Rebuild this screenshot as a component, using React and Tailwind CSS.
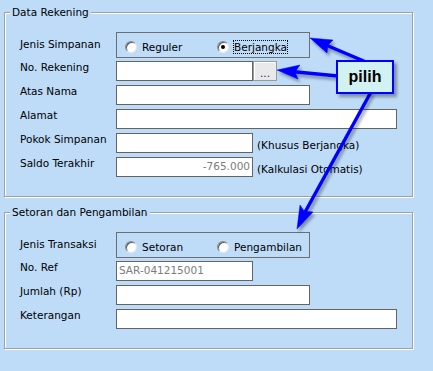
import React from 'react';

const Radio = ({ checked }) => (
  <span className="mt-[1px] w-[12px] h-[12px] shrink-0 rounded-full border border-[#8a8a8a] border-b-[#e8e8e8] border-r-[#e8e8e8] bg-white shadow-[inset_1px_1px_0_#5a5a5a] flex items-center justify-center">
    {checked && <span className="w-[4px] h-[4px] rounded-full bg-black" />}
  </span>
);

const Option = ({ label, checked, focused, className = '' }) => (
  <div className={`flex items-start ${className}`}>
    <Radio checked={checked} />
    <span className={`ml-[4px] leading-[12px] border ${focused ? 'border-dotted border-black' : 'border-transparent'}`}>
      {label}
    </span>
  </div>
);

const RadioRow = ({ label, left, right, rightChecked, rightFocused }) => (
  <div className="flex h-[26px]">
    <span className="w-[96px] pt-[6px] leading-[13px]">{label}</span>
    <div className="w-[194px] h-[26px] border border-[#6e6e6e] flex items-start pt-[7px] pl-[8px]">
      <Option label={left} className="w-[92px]" />
      <Option label={right} checked={rightChecked} focused={rightFocused} />
    </div>
  </div>
);

const Field = ({ label, width, value, right, muted, first, children }) => (
  <div className={`flex h-[20px] ${first ? 'mt-[3px]' : 'mt-[4px]'}`}>
    <span className="w-[96px] leading-[13px]">{label}</span>
    <div
      className={`h-[20px] border border-[#646464] bg-white pt-[2px] px-[2px] leading-[12px] whitespace-nowrap overflow-hidden ${right ? 'text-right' : ''} ${muted ? 'text-[#7c7c7c]' : ''}`}
      style={{ width }}
    >
      {value}
    </div>
    {children}
  </div>
);

const GroupBox = ({ title, className = '', children }) => (
  <fieldset className={`w-[409px] border border-[#a0a0a0] shadow-[1px_1px_0_#fff,inset_1px_1px_0_#fff] pl-[5px] pt-[12px] pb-[19px] ${className}`}>
    <legend className="px-[2px] leading-[15px] bg-[#bedcf8]">{title}</legend>
    <div className="pl-[10px] flex flex-col">{children}</div>
  </fieldset>
);

const Note = ({ children }) => (
  <span className="ml-[4px] pt-[6px] leading-[13px] whitespace-nowrap">{children}</span>
);

const Callout = () => (
  <>
    <svg className="absolute left-0 top-0 pointer-events-none" width="433" height="371" viewBox="0 0 433 371">
      <defs>
        <filter id="sh" x="-20%" y="-20%" width="140%" height="140%">
          <feDropShadow dx="2" dy="3" stdDeviation="1.5" floodColor="#000" floodOpacity="0.35" />
        </filter>
      </defs>
      <g fill="#0000ff" stroke="#0000ff" filter="url(#sh)">
        <line x1="366" y1="62" x2="326" y2="45" strokeWidth="3.5" />
        <polygon points="310,38 333,40 328,45 327,53" strokeWidth="0.5" />
        <line x1="338" y1="76" x2="294" y2="71.8" strokeWidth="3.5" />
        <polygon points="277,70 300,65 295,72 298,79" strokeWidth="0.5" />
        <line x1="371" y1="92" x2="304" y2="214" strokeWidth="3.5" />
        <polygon points="297,229 300,205 304,211 313,212" strokeWidth="0.5" />
      </g>
    </svg>
    <div className="absolute left-[336px] top-[60px] w-[58px] h-[34px] border-2 border-[#0000ff] bg-[#d2f1f3] shadow-[3px_3px_3px_rgba(0,0,0,0.35)] flex items-center justify-center font-['Liberation_Sans',sans-serif] font-bold text-[16px] leading-none text-black">
      pilih
    </div>
  </>
);

export default function App() {
  return (
    <div className="relative w-[433px] h-[371px] overflow-hidden bg-[#bedcf8] pl-[4px] pt-[5px] font-['DejaVu_Sans',sans-serif] text-[10.5px] text-black">
      <GroupBox title="Data Rekening">
        <RadioRow label="Jenis Simpanan" left="Reguler" right="Berjangka" rightChecked rightFocused />
        <Field label="No. Rekening" width={137} first>
          <button className="w-[24px] h-[20px] border border-[#9a9a9a] bg-[#e9e9e9] shadow-[inset_1px_1px_0_#fff] text-[#1c1c6e] leading-[12px] pt-[3px] text-[10.5px]">...</button>
        </Field>
        <Field label="Atas Nama" width={194} />
        <Field label="Alamat" width={281} />
        <Field label="Pokok Simpanan" width={137}>
          <Note>(Khusus Berjangka)</Note>
        </Field>
        <Field label="Saldo Terakhir" width={137} value="-765.000" right muted>
          <Note>(Kalkulasi Otomatis)</Note>
        </Field>
      </GroupBox>

      <GroupBox title="Setoran dan Pengambilan" className="mt-[8px]">
        <RadioRow label="Jenis Transaksi" left="Setoran" right="Pengambilan" />
        <Field label="No. Ref" width={137} value="SAR-041215001" muted first />
        <Field label="Jumlah (Rp)" width={194} />
        <Field label="Keterangan" width={281} />
      </GroupBox>

      <Callout />
    </div>
  );
}
